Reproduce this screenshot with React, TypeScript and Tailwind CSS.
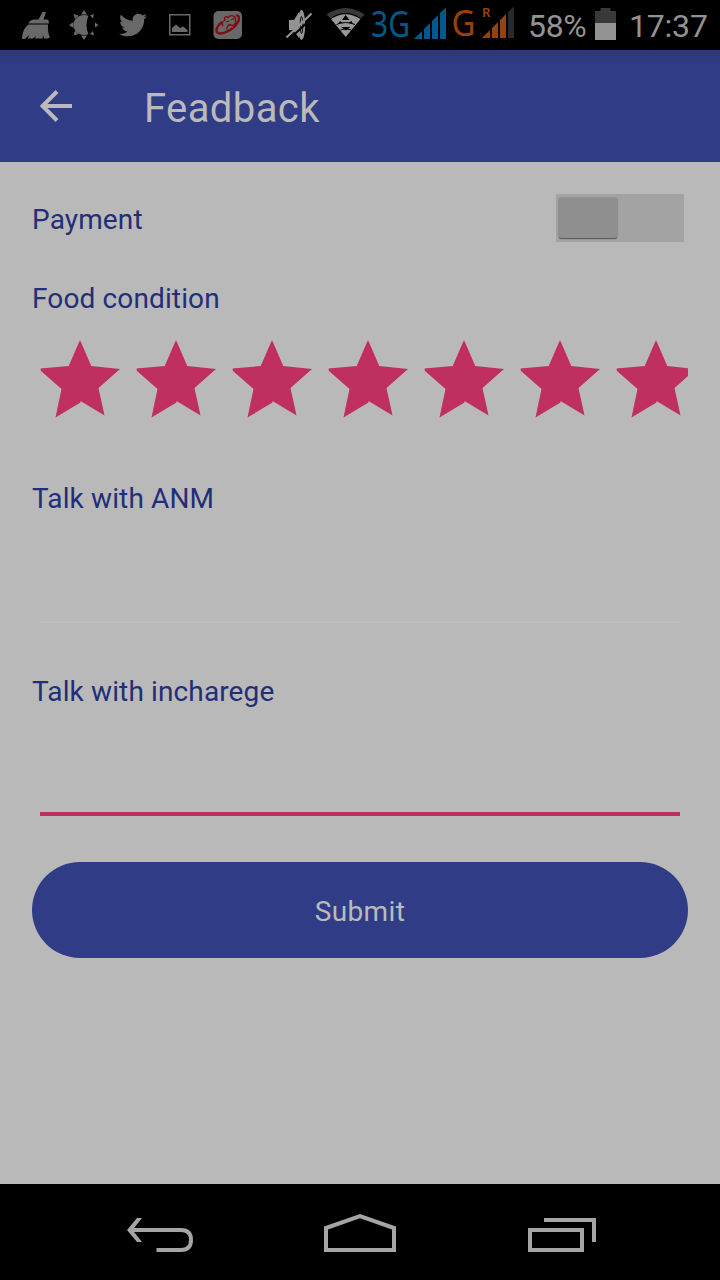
import type { ReactNode } from "react";
import { FaTwitter } from "react-icons/fa";

function Glyph({ x, w, children }: { x: number; w: number; children: ReactNode }) {
  return (
    <svg width={w} height={50} viewBox={`${x} 0 ${w} 50`} className="block shrink-0 overflow-visible">
      {children}
    </svg>
  );
}

function StatusBar() {
  return (
    <div className="flex h-[50px] shrink-0 items-center bg-black pl-5 text-[#939393]">
      <Glyph x={20} w={42}>
        <g fill="#696969">
          <path d="M42.500 12H46L43.500 19.500H47.500Q49 20 48.800 23.500H28.500Q29.500 20 34 19.600H38.500Z" />
          <path d="M28.500 24.500H48Q47.500 32 50 37.500L47.500 38.500H44L43 35L42.500 38.500H35L36 36L33 38.500H28L29 35L25 39H22Q22 29 28.500 24.500Z" />
        </g>
      </Glyph>
      <Glyph x={62} w={50}>
        <g fill="#696969">
          <path d="M84 10L87 14.500H81ZM84 40L87 35.500H81ZM69 25L73.500 22V28ZM98.500 25L95 22.500V27.500ZM73.500 14L78.500 15.500L75 19ZM94 14L93 18.500L90 15.500ZM73.500 35.500L75 30.500L78.500 34ZM94 35.500L90 34L93 31Z" />
          <path d="M88.500 15.700C80 13 73.500 18.500 73.500 25C73.500 31.500 80 37 88.500 34.300Q86.500 30 86.500 25Q86.500 20 88.500 15.700Z" />
        </g>
      </Glyph>
      <div className="flex h-full w-[51px] items-center pl-[6.500px] text-[#696969]">
        <FaTwitter size={28} />
      </div>
      <Glyph x={163} w={44}>
        <rect x="169.750" y="14.750" width="20" height="20" fill="none" stroke="#696969" strokeWidth="1.500" />
        <path d="M172 32V28L176 24.500L180 28L183 26.500L187.500 30V32Z" fill="#696969" />
      </Glyph>
      <Glyph x={207} w={73}>
        <rect x="213.500" y="11" width="28.500" height="28" rx="5" fill="#686868" />
        <g fill="none" stroke="#7e0c10">
          <path d="M222 22C216.500 26 215 31 218 33C223 35 235 29 238.500 21C240 17 238.500 15 236 15.500" strokeWidth="2.400" />
          <path d="M223 26C221.500 24 222.500 21 225 20C223.500 17 226 16 228 17.500C231 14 236 16 235.500 20C237 24 232 27 230 24.500C228 25 226 28 227 30" strokeWidth="1.300" />
          <path d="M226 22L229 21M231 20L234 18.500" strokeWidth="1.200" />
        </g>
      </Glyph>
      <Glyph x={280} w={42}>
        <path d="M289 20H294L299 12V38L293 30H289Z" fill="#939393" />
        <ellipse cx="301.500" cy="25" rx="3.700" ry="15" fill="#939393" />
        <ellipse cx="301.500" cy="25" rx="1.300" ry="8.500" fill="none" stroke="#000" strokeWidth="0.900" />
        <path d="M289 39.500L314 16" stroke="#000" strokeWidth="2" />
        <path d="M286.500 37.500L311.500 13.500" stroke="#939393" strokeWidth="2.200" />
      </Glyph>
      <Glyph x={322} w={48}>
        <path d="M326.500 14.500Q345.500 1.500 364.500 14.500L361 18.200Q345.500 8 330.500 18.200Z" fill="#393939" />
        <path d="M331 19Q345.500 9.500 360.500 19L345.700 37Z" fill="#999" />
        <path d="M336.500 24.500Q345.500 20.500 355 24.500M340.500 30Q345.500 27.500 351 30" fill="none" stroke="#000" strokeWidth="1" />
        <path d="M345.600 15L342 20H349.500ZM340 21L343 23L338 24ZM351.500 21L348 23L353 24ZM341 27H350.500L346 30.500Z" fill="#000" />
      </Glyph>
      <Glyph x={370} w={80}>
        <text x="371" y="37" fontSize="37" textLength="39" lengthAdjust="spacingAndGlyphs" fill="#005a87" className="font-['Noto_Sans',sans-serif]">3G</text>
        <path d="M414 39L422 31V39ZM424 29L430 23V39H424ZM432 21L438 15V39H432ZM440 13L446 7.500V39H440Z" fill="#005a87" />
      </Glyph>
      <Glyph x={450} w={74}>
        <text x="451.500" y="36.300" fontSize="36" textLength="24" lengthAdjust="spacingAndGlyphs" fill="#98410a" className="font-['Noto_Sans',sans-serif]">G</text>
        <text x="482" y="16.500" fontSize="12.500" textLength="8.500" lengthAdjust="spacingAndGlyphs" fill="#98410a" className="font-['Noto_Sans',sans-serif] font-semibold">R</text>
        <path d="M482 38L490 30V38ZM492 28L498 22V38H492ZM500 20L506 14V38H500Z" fill="#98410a" />
        <path d="M508 12L514 6.500V38H508Z" fill="#292929" />
      </Glyph>
      <span className="ml-1 w-[67px] whitespace-nowrap pt-px text-[32px] leading-none tracking-[-0.300px]">58%</span>
      <Glyph x={595} w={34}>
        <path d="M600.500 8H610.500V11H616V23H595V11H600.500Z" fill="#393939" />
        <path d="M595 23H616V40H595Z" fill="#939393" />
      </Glyph>
      <span className="whitespace-nowrap pt-px text-[32px] leading-none tracking-[-0.200px]">17:37</span>
    </div>
  );
}

function Header() {
  return (
    <header className="flex h-28 shrink-0 items-center bg-[#303d86] bg-linear-to-b from-[#2d387b] to-[#303d86] to-15% pl-10 text-[#bababa]">
      <svg width="32" height="32" viewBox="0 0 32 32" className="block">
        <path d="M17 1.500L2.500 16L17 30.500M2.500 16H32" fill="none" stroke="#bababa" strokeWidth="4" />
      </svg>
      <h1 className="ml-[72px] pt-1.5 text-[40px] leading-none tracking-[0.400px]">Feadback</h1>
    </header>
  );
}

function Star() {
  return (
    <svg width="96" height="96" viewBox="0 0 96 96" className="block shrink-0">
      <path d="M48 8L59.300 34L88 37L66.500 56L72.500 83.500L48.500 69V70.500L23.500 85.500L29.500 57L9 39L8.500 36.500L36.700 34Z" fill="#bf2f60" />
    </svg>
  );
}

function Label({ children }: { children: ReactNode }) {
  return <div className="text-[28px] leading-[38px] tracking-[0.130px] text-[#222e78]">{children}</div>;
}

function NavigationBar() {
  return (
    <nav className="flex h-24 shrink-0 items-center bg-black pl-[126px]">
      <svg width="198" height="96" viewBox="126 0 198 96" fill="none" stroke="#a5a5a5" strokeWidth="4">
        <path d="M129 46H181Q191 46 191 56Q191 66 181 66H156.500" />
        <path d="M137 34H142L132.500 46L142 58H137L127 46Z" fill="#a5a5a5" stroke="none" />
      </svg>
      <svg width="204" height="96" viewBox="324 0 204 96" fill="none" stroke="#a5a5a5" strokeWidth="4">
        <path d="M326 66V44L360 32L394 44V66Z" />
      </svg>
      <svg width="68" height="96" viewBox="528 0 68 96" fill="none" stroke="#a5a5a5" strokeWidth="4">
        <path d="M530 46H582V66H530ZM544 36H594V58" />
      </svg>
    </nav>
  );
}

export default function App() {
  return (
    <div className="flex h-[1280px] w-[720px] flex-col overflow-hidden bg-[#b9b9b9] font-[Roboto,sans-serif]">
      <StatusBar />
      <Header />
      <main className="flex flex-1 flex-col px-8">
        <div className="mt-8 flex h-12 items-center justify-between pr-1">
          <div className="pt-1"><Label>Payment</Label></div>
          <button type="button" role="switch" aria-checked="false" aria-label="Payment" className="flex h-12 w-32 items-start bg-[#a3a3a3] pl-[3px] pt-1">
            <span className="block h-[40px] w-[58px] rounded-[2px] bg-[#8f8f8f] shadow-[0_1px_1px_#555,0_0_2px_#777]" />
          </button>
        </div>
        <div className="mt-[38px]"><Label>Food condition</Label></div>
        <div className="mt-[14px] flex h-24 overflow-hidden">
          {[1, 2, 3, 4, 5, 6, 7].map((n) => <Star key={n} />)}
        </div>
        <div className="mt-[52px]"><Label>Talk with ANM</Label></div>
        <div className="mx-2 h-[105px] border-b-2 border-[#bebebe]" />
        <div className="mt-[50px]"><Label>Talk with incharege</Label></div>
        <div className="mx-2 h-[105px] border-b-4 border-[#bf2f60]" />
        <button type="button" className="mt-[46px] h-24 w-full rounded-full bg-[#303d86] pt-[3px] text-[28px] tracking-[0.400px] text-[#bababa]">
          Submit
        </button>
      </main>
      <NavigationBar />
    </div>
  );
}
